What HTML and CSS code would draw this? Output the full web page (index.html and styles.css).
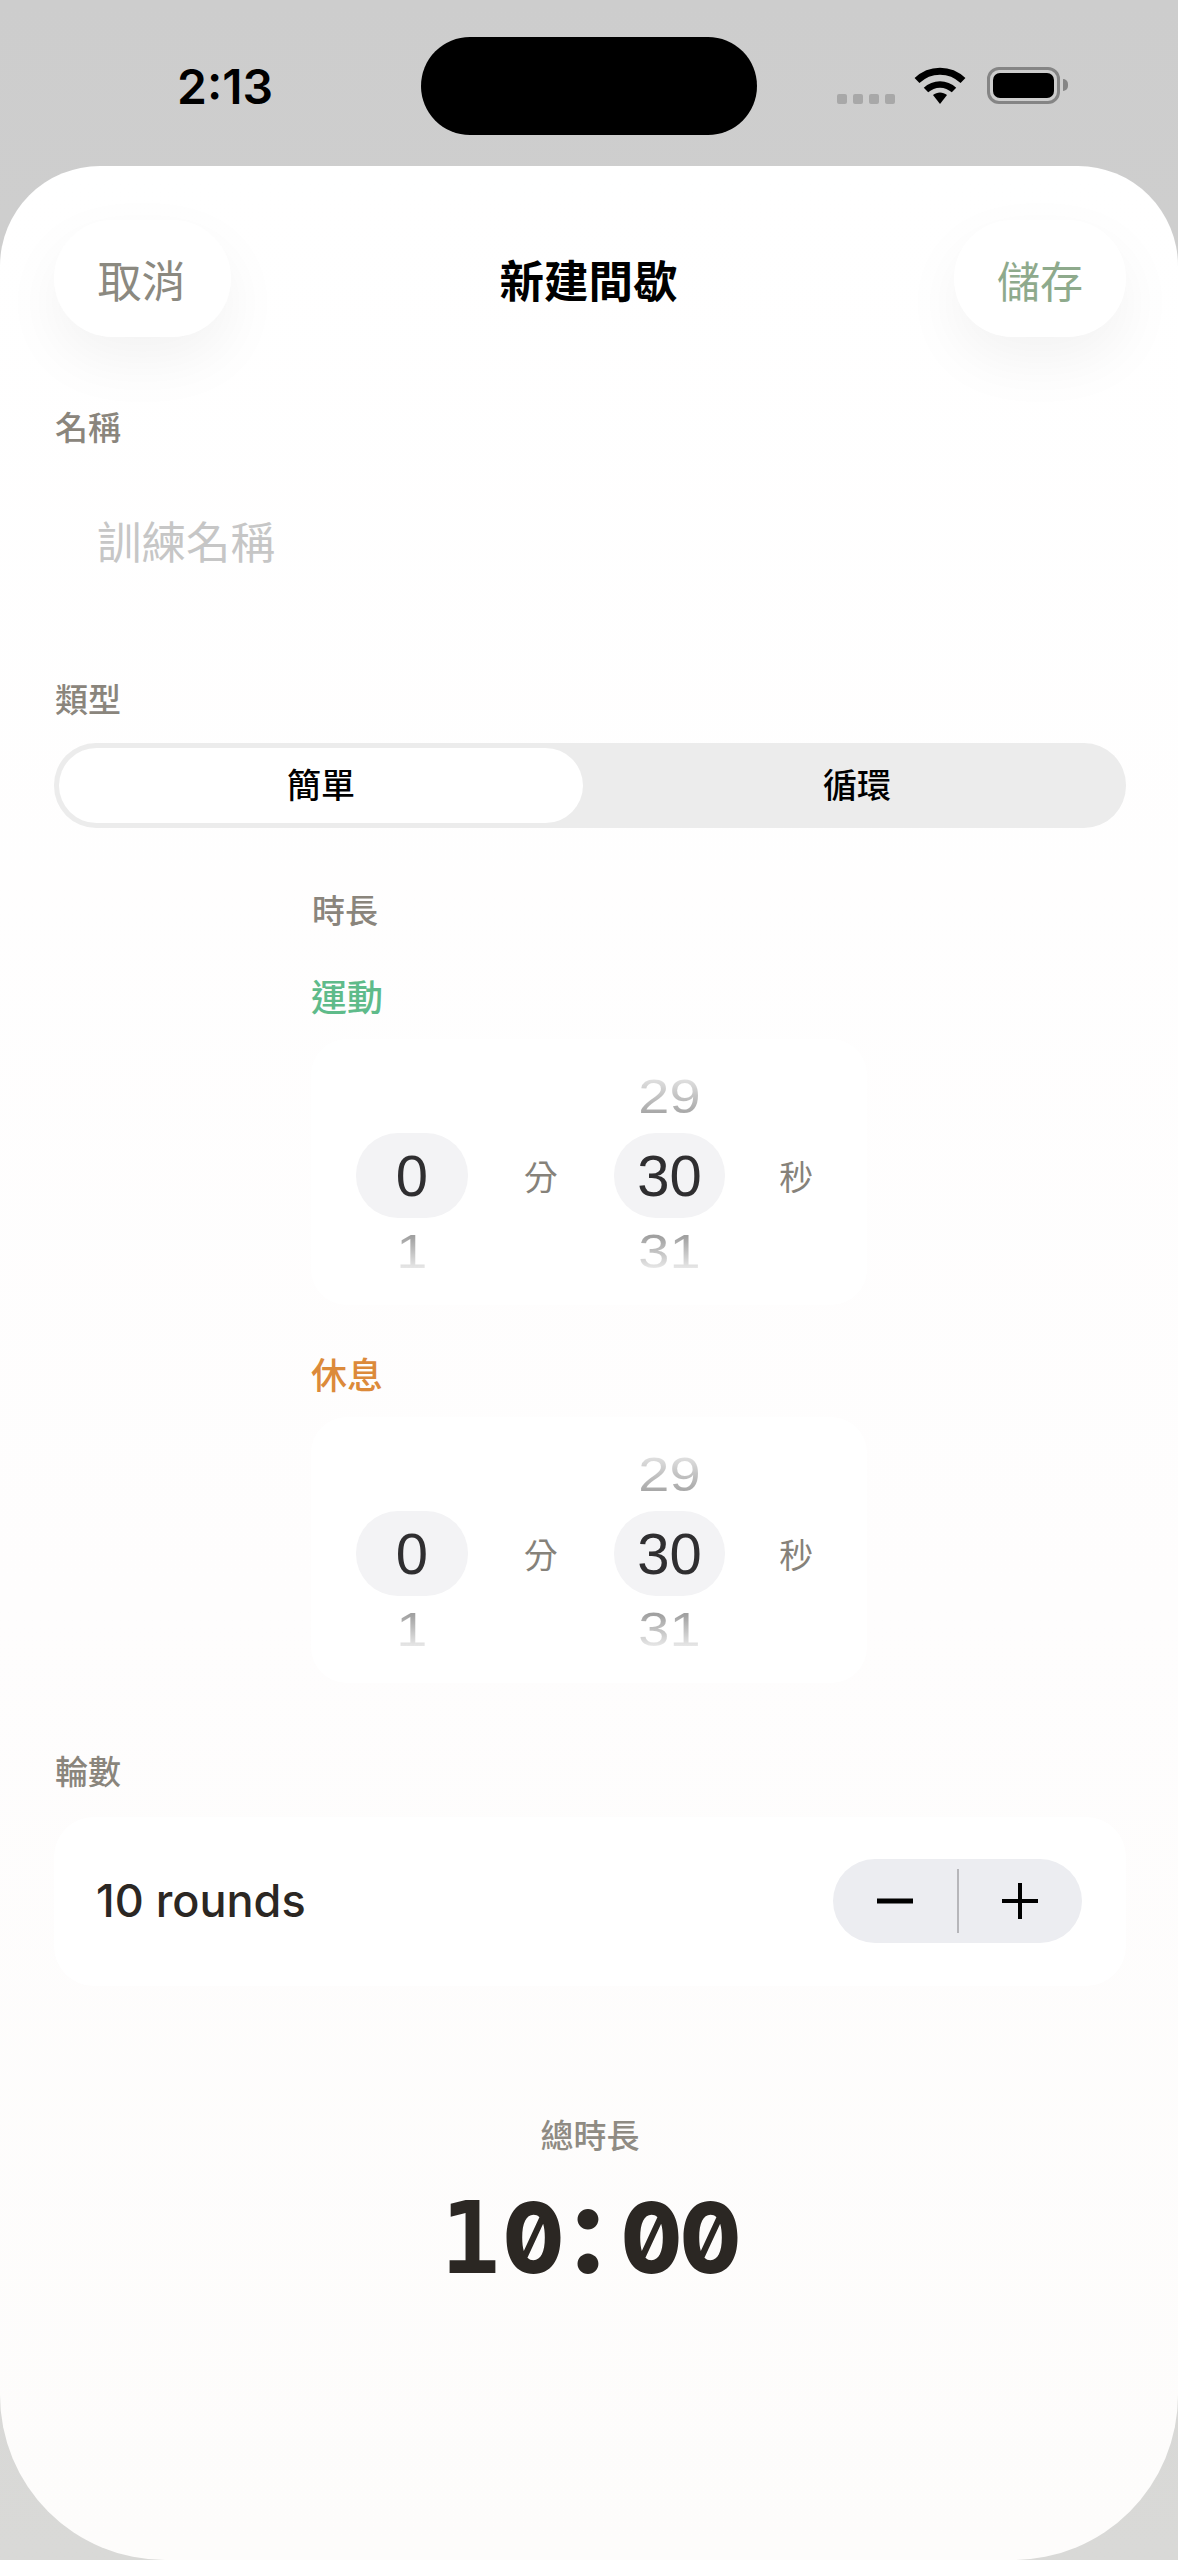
FILE: index.html
```html
<!DOCTYPE html>
<html lang="zh-Hant">
<head>
    <meta charset="UTF-8">
    <meta name="viewport" content="width=device-width, initial-scale=1.0">
    <title>新建間歇</title>
    <link rel="stylesheet" href="styles.css">
</head>
<body>

    <!-- Status bar -->
    <div class="status-bar">
        <span class="status-time">2:13</span>
        <div class="island"></div>
        <div class="status-icons">
            <div class="signal"><i></i><i></i><i></i><i></i></div>
            <svg class="wifi" width="52" height="37" viewBox="0 0 52 37">
                <path d="M3 13.5C16 1 36 1 49 13.5" fill="none" stroke="#000" stroke-width="7"/>
                <path d="M12 23C20 15.5 32 15.5 40 23" fill="none" stroke="#000" stroke-width="6.5"/>
                <path d="M19 28C23 24.5 29 24.5 33 28L26 37Z" fill="#000"/>
            </svg>
            <div class="battery"><div class="battery-fill"></div></div>
            <div class="battery-cap"></div>
        </div>
    </div>

    <div class="sheet">
        <!-- Header -->
        <div class="header">
            <button type="button" class="nav-btn cancel-btn">取消</button>
            <div class="title">新建間歇</div>
            <button type="button" class="nav-btn save-btn">儲存</button>
        </div>

        <!-- Name -->
        <div class="label name-label">名稱</div>
        <div class="name-input">訓練名稱</div>

        <!-- Type -->
        <div class="label type-label">類型</div>
        <div class="segment">
            <div class="segment-item active">簡單</div>
            <div class="segment-item">循環</div>
        </div>

        <!-- Duration -->
        <div class="duration">
            <div class="label">時長</div>

            <div class="phase phase-work">運動</div>
            <div class="picker">
                <div class="wheel">
                    <div class="wheel-top"><span class="side-num fade-up">&nbsp;</span></div>
                    <div class="wheel-current">0</div>
                    <div class="wheel-bottom"><span class="side-num fade-down">1</span></div>
                </div>
                <div class="unit unit-min">分</div>
                <div class="wheel">
                    <div class="wheel-top"><span class="side-num fade-up">29</span></div>
                    <div class="wheel-current">30</div>
                    <div class="wheel-bottom"><span class="side-num fade-down">31</span></div>
                </div>
                <div class="unit unit-sec">秒</div>
            </div>

            <div class="phase phase-rest">休息</div>
            <div class="picker">
                <div class="wheel">
                    <div class="wheel-top"><span class="side-num fade-up">&nbsp;</span></div>
                    <div class="wheel-current">0</div>
                    <div class="wheel-bottom"><span class="side-num fade-down">1</span></div>
                </div>
                <div class="unit unit-min">分</div>
                <div class="wheel">
                    <div class="wheel-top"><span class="side-num fade-up">29</span></div>
                    <div class="wheel-current">30</div>
                    <div class="wheel-bottom"><span class="side-num fade-down">31</span></div>
                </div>
                <div class="unit unit-sec">秒</div>
            </div>
        </div>

        <!-- Rounds -->
        <div class="label rounds-label">輪數</div>
        <div class="rounds-card">
            <span class="rounds-text">10 rounds</span>
            <div class="stepper">
                <button type="button" class="step-btn">
                    <svg width="36" height="36" viewBox="0 0 36 36"><path d="M0 18H36" stroke="#000" stroke-width="5"/></svg>
                </button>
                <div class="step-divider"></div>
                <button type="button" class="step-btn">
                    <svg width="36" height="36" viewBox="0 0 36 36"><path d="M0 18H36M18 0V36" stroke="#000" stroke-width="4"/></svg>
                </button>
            </div>
        </div>

        <!-- Total -->
        <div class="total">
            <div class="total-label">總時長</div>
            <div class="total-time"><span>1</span><span class="zero">0</span><span class="colon">:</span><span class="zero">0</span><span class="zero">0</span></div>
        </div>
    </div>

</body>
</html>
```

FILE: styles.css
```css
body {
    font-family: "Inter", "Noto Sans CJK TC", sans-serif;
    margin: 0;
    padding: 0;
    height: 2560px;
    overflow: hidden;
    background: linear-gradient(180deg, #cdcdcd 0%, #d9d9d7 100%);
}

button {
    font-family: inherit;
    border: none;
    padding: 0;
}

/* Status bar */
.status-bar {
    height: 166px;
    display: flex;
    align-items: flex-start;
    position: relative;
}

.status-time {
    margin: 64px 0 0 177px;
    width: 96px;
    font-size: 48px;
    line-height: 46px;
    font-weight: 600;
    color: #000;
    white-space: nowrap;
}

.island {
    width: 336px;
    height: 98px;
    margin: 37px 0 0 148px;
    background-color: #000;
    border-radius: 49px;
}

.status-icons {
    margin: 67px 0 0 80px;
    display: flex;
    align-items: flex-start;
}

.signal {
    display: flex;
    gap: 6px;
    margin-top: 27px;
    margin-right: 19px;
}

.signal i {
    display: block;
    width: 10px;
    height: 10px;
    border-radius: 2px;
    background-color: #a8a8a8;
}

.wifi {
    margin-right: 21px;
}

.battery {
    width: 73px;
    height: 37px;
    box-sizing: border-box;
    border: 3px solid #858585;
    border-radius: 12px;
    padding: 3px;
}

.battery-fill {
    height: 100%;
    background-color: #000;
    border-radius: 7px;
}

.battery-cap {
    width: 5px;
    height: 12px;
    margin: 12px 0 0 3px;
    background-color: #858585;
    border-radius: 0 5px 5px 0;
}

/* Sheet */
.sheet {
    height: 2394px;
    box-sizing: border-box;
    padding: 54px 52px 0 54px;
    background: linear-gradient(180deg, #ffffff 0%, #fefdfd 60%, #fdfcfb 100%);
    border-radius: 100px 100px 165px 165px;
}

.header {
    display: flex;
    align-items: center;
}

.nav-btn {
    height: 117px;
    background-color: #fff;
    border-radius: 58px;
    font-size: 44px;
    box-shadow: 0 24px 60px rgba(0, 0, 0, 0.05);
}

.cancel-btn {
    width: 177px;
    padding-right: 2px;
    color: #8b8980;
}

.save-btn {
    width: 172px;
    font-size: 43px;
    color: #8eaa8c;
}

.title {
    flex: 1;
    text-align: center;
    font-size: 44.5px;
    font-weight: 600;
    color: #000;
    padding-right: 8px;
}

.label {
    margin-left: 1px;
    font-size: 33px;
    line-height: 40px;
    font-weight: 500;
    color: #8a857c;
}

.name-label {
    margin-top: 71px;
}

.name-input {
    margin-top: 35px;
    height: 120px;
    line-height: 120px;
    padding-left: 43px;
    font-size: 44.5px;
    color: #c6c6c6;
}

.type-label {
    margin-top: 77px;
}

.segment {
    margin-top: 23px;
    height: 85px;
    box-sizing: border-box;
    padding: 5px;
    display: flex;
    background-color: #ececec;
    border-radius: 42px;
}

.segment-item {
    width: 524px;
    line-height: 75px;
    text-align: center;
    font-size: 34px;
    font-weight: 500;
    color: #000;
    border-radius: 38px;
}

.segment-item + .segment-item {
    flex: 1;
    padding-left: 10px;
}

.segment-item.active {
    background-color: #fff;
}

/* Duration pickers */
.duration {
    margin-top: 63px;
    padding-left: 257px;
}

.phase {
    font-size: 36px;
    line-height: 44px;
    font-weight: 500;
}

.phase-work {
    margin-top: 45px;
    color: #5fbb8a;
}

.phase-rest {
    margin-top: 49px;
    color: #dc8a3a;
}

.picker {
    width: 556px;
    height: 266px;
    box-sizing: border-box;
    margin-top: 19px;
    padding: 20px 0 0 45px;
    display: flex;
    background-color: #fff;
    border-radius: 36px;
}

.wheel {
    width: 112px;
    text-align: center;
    font-family: "Liberation Sans", sans-serif;
}

.wheel-top {
    height: 74px;
    line-height: 74px;
}

.wheel-bottom {
    height: 66px;
    line-height: 66px;
}

.wheel-current {
    height: 85px;
    line-height: 85px;
    font-size: 58px;
    color: #2f2e30;
    background-color: #f3f3f5;
    border-radius: 42px;
}

.side-num {
    display: inline-block;
    font-size: 56px;
    line-height: 52px;
    vertical-align: middle;
    transform: scaleY(0.86);
    color: transparent;
    -webkit-background-clip: text;
    background-clip: text;
}

.fade-up {
    background-image: linear-gradient(180deg, #e0e0e0 10%, #a8a8a8 85%);
}

.fade-down {
    background-image: linear-gradient(180deg, #a0a0a0 15%, #e6e6e6 85%);
}

.unit {
    height: 85px;
    margin-top: 74px;
    line-height: 85px;
    text-align: center;
    font-family: "Noto Sans CJK TC", sans-serif;
    font-size: 34px;
    color: #86827a;
}

.unit-min {
    width: 146px;
}

.unit-sec {
    width: 142px;
}

/* Rounds */
.rounds-label {
    margin-top: 69px;
}

.rounds-card {
    margin-top: 25px;
    height: 169px;
    box-sizing: border-box;
    padding: 0 44px 2px 42px;
    display: flex;
    align-items: center;
    justify-content: space-between;
    background-color: #fff;
    border-radius: 40px;
}

.rounds-text {
    font-size: 45px;
    font-weight: 500;
    color: #2b2723;
}

.stepper {
    width: 249px;
    height: 84px;
    display: flex;
    align-items: center;
    background-color: #ecedf1;
    border-radius: 42px;
}

.step-btn {
    flex: 1;
    height: 84px;
    display: flex;
    align-items: center;
    justify-content: center;
    background: none;
}

.step-divider {
    width: 2px;
    height: 64px;
    background-color: #b6b6ba;
}

/* Total */
.total {
    margin-top: 130px;
    text-align: center;
}

.total-label {
    font-size: 33px;
    line-height: 40px;
    font-weight: 500;
    color: #8f8b83;
}

.total-time {
    margin-top: 9px;
    padding-right: 4px;
    display: flex;
    align-items: baseline;
    justify-content: center;
    font-family: "DejaVu Sans Mono", monospace;
    font-size: 99px;
    line-height: 118px;
    font-weight: 700;
    color: #2b2723;
}

.total-time span {
    width: 59px;
    text-align: center;
}

/* DejaVu's zero is dotted, the slashed one comes from Inter */
.total-time .zero {
    font-family: "Inter", sans-serif;
    font-size: 98px;
    font-weight: 800;
    font-feature-settings: "zero" 1;
    font-variant-numeric: slashed-zero;
    transform: scaleX(0.9);
}

/* round dots, DejaVu's are square */
.total-time .colon {
    font-family: "Lato", sans-serif;
    font-size: 128px;
    font-weight: 900;
}
```
